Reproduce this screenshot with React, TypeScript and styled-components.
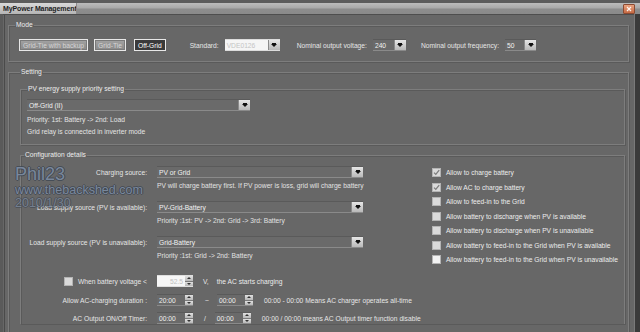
import React from 'react';
import styled, { createGlobalStyle } from 'styled-components';

const GlobalStyle = createGlobalStyle`
  html, body {
    margin: 0;
    padding: 0;
    background: #676767;
  }
  body {
    width: 640px;
    height: 332px;
    overflow: hidden;
    font-family: "Liberation Sans", Arial, sans-serif;
    font-size: 6.7px;
    color: #ececec;
  }
`;

const Window = styled.div`
  position: relative;
  width: 640px;
  height: 332px;
  display: flex;
  flex-direction: column;
  background: #676767;
  overflow: hidden;
`;

const BehindStrip = styled.div`
  height: 3px;
  background: #5c5c5c;
`;

const TitleBar = styled.div`
  height: 11px;
  display: flex;
  align-items: stretch;
  background: linear-gradient(#bcbcbc 0%, #a9a9a9 45%, #8d8d8d 55%, #8a8a8a 100%);
  border-bottom: 1px solid #4e4e4e;
`;

const TitleTab = styled.div`
  width: 77px;
  padding-left: 3px;
  box-sizing: border-box;
  display: flex;
  align-items: center;
  white-space: nowrap;
  overflow: hidden;
  font-weight: bold;
  font-size: 7px;
  letter-spacing: -0.1px;
  color: #1e1e1e;
  background: linear-gradient(#d9d9d9, #b4b4b4);
  border-right: 1px solid #8c8c8c;
`;

const TitleFill = styled.div`
  flex: 1;
`;

const CloseButton = styled.div`
  width: 10px;
  margin: 1px 5px 0 0;
  display: flex;
  align-items: center;
  justify-content: center;
  background: linear-gradient(#e9a27f, #c66a44);
  border: 1px solid #8b4a32;
  border-radius: 1px;
`;

const Body = styled.div`
  flex: 1;
  display: flex;
  flex-direction: column;
  padding: 5px 6px 0 3px;
  margin-left: 4px;
  margin-right: 5px;
  border-left: 1px solid #4a4a4a;
  position: relative;
`;

const LeftEdge = styled.div`
  position: absolute;
  left: 0;
  top: 14px;
  bottom: 0;
  width: 3px;
  background: #5a5a5a;
`;

const RightEdge = styled.div`
  position: absolute;
  right: 0;
  top: 14px;
  bottom: 0;
  width: 5px;
  background: #3b3b3b;
  border-left: 1px solid #7a7a7a;
`;

const Group = styled.fieldset`
  margin: 0;
  padding: 0 6px 0 6px;
  border: 1px solid #7d7d7d;
  box-shadow: inset 1px 1px 0 #5a5a5a, 1px 1px 0 #5a5a5a;
  min-width: 0;
`;

const Legend = styled.legend`
  padding: 0 1px;
  line-height: 10px;
  color: #eeeeee;
`;

const ModeGroup = styled(Group)`
  padding: 9px 6px 10px 6px;
`;

const SettingGroup = styled(Group)`
  margin-top: 5px;
  flex: 1;
  padding: 7px 3px 0 11px;
  border-bottom: none;
`;

const PvGroup = styled(Group)`
  padding: 5px 6px 6px 6px;
`;

const ConfigGroup = styled(Group)`
  margin-top: 5px;
  padding: 6px 6px 0 3px;
  border-bottom: none;
  flex: 1;
`;

const ModeRow = styled.div`
  display: flex;
  align-items: center;
  height: 12px;
  margin-left: 4px;
`;

const ModeButton = styled.div<{ $active?: boolean; $gap: number }>`
  height: 12px;
  box-sizing: border-box;
  margin-left: ${p => p.$gap}px;
  padding: 0 3px;
  display: flex;
  align-items: center;
  border: 1px solid #e8e8e8;
  background: ${p => (p.$active ? '#3a3a3a' : 'linear-gradient(#a3a3a3, #8a8a8a)')};
  color: ${p => (p.$active ? '#ffffff' : '#d6d6d6')};
  box-shadow: ${p => (p.$active ? 'none' : 'inset 0 0 0 1px #7a7a7a')};
`;

const FieldLabel = styled.span<{ $gap: number }>`
  margin-left: ${p => p.$gap}px;
  margin-right: 6px;
  color: #e6e6e6;
  white-space: nowrap;
`;

const SelectBox = styled.div<{ $width: number; $disabled?: boolean }>`
  width: ${p => p.$width}px;
  height: 12px;
  box-sizing: border-box;
  display: flex;
  align-items: stretch;
  background: ${p => (p.$disabled ? '#f5f5f5' : '#6a6a6a')};
  border-top: 1px solid ${p => (p.$disabled ? '#dcdcdc' : '#5a5a5a')};
  border-bottom: 1px solid ${p => (p.$disabled ? '#dcdcdc' : '#8a8a8a')};
`;

const SelectText = styled.span<{ $disabled?: boolean }>`
  flex: 1;
  padding-left: 2px;
  display: flex;
  align-items: center;
  white-space: nowrap;
  color: ${p => (p.$disabled ? '#c4c4c4' : '#f2f2f2')};
`;

const ArrowButton = styled.span`
  width: 11px;
  display: flex;
  align-items: center;
  justify-content: center;
  background: linear-gradient(#e6e6e6, #b9b9b9);
  border-left: 1px solid #8a8a8a;
`;

const Triangle = styled.span`
  width: 0;
  height: 0;
  border-left: 3px solid transparent;
  border-right: 3px solid transparent;
  border-top: 3px solid #111;
  box-shadow: 0 -2px 0 -1px #111;
`;

const InfoLine = styled.div<{ $top?: number }>`
  line-height: 12px;
  margin-top: ${p => p.$top ?? 0}px;
  color: #e4e4e4;
  white-space: nowrap;
`;

const ConfigBody = styled.div`
  display: flex;
  align-items: flex-start;
`;

const LeftColumn = styled.div`
  width: 408px;
  display: flex;
  flex-direction: column;
`;

const SourceGroup = styled.div`
  display: flex;
  flex-direction: column;
  margin-bottom: 9px;
`;

const FormRow = styled.div<{ $top?: number }>`
  display: grid;
  grid-template-columns: 123px auto;
  column-gap: 10px;
  align-items: center;
  height: 12px;
  margin-top: ${p => p.$top ?? 0}px;
`;

const RowLabel = styled.span`
  display: flex;
  align-items: center;
  justify-content: flex-end;
  gap: 5px;
  white-space: nowrap;
  color: #e6e6e6;
`;

const Note = styled.div`
  margin: 2px 0 0 133px;
  line-height: 12px;
  white-space: nowrap;
  color: #e2e2e2;
`;

const Inline = styled.div`
  display: flex;
  align-items: center;
  white-space: nowrap;
`;

const Sep = styled.span<{ $left: number; $right: number }>`
  margin: 0 ${p => p.$right}px 0 ${p => p.$left}px;
  color: #e6e6e6;
`;

const SpinBox = styled.div<{ $disabled?: boolean }>`
  width: 36px;
  height: 12px;
  box-sizing: border-box;
  display: flex;
  background: ${p => (p.$disabled ? '#f6f6f6' : '#6a6a6a')};
  border-top: 1px solid ${p => (p.$disabled ? '#dedede' : '#5a5a5a')};
  border-bottom: 1px solid ${p => (p.$disabled ? '#dedede' : '#8a8a8a')};
`;

const SpinText = styled.span<{ $disabled?: boolean }>`
  flex: 1;
  display: flex;
  align-items: center;
  justify-content: ${p => (p.$disabled ? 'flex-end' : 'flex-start')};
  padding: 0 2px;
  color: ${p => (p.$disabled ? '#c0c0c0' : '#f0f0f0')};
`;

const SpinButtons = styled.span`
  width: 8px;
  display: flex;
  flex-direction: column;
  gap: 1px;
  background: #7a7a7a;
`;

const SpinHalf = styled.span<{ $down?: boolean }>`
  flex: 1;
  display: flex;
  align-items: center;
  justify-content: center;
  background: linear-gradient(#e0e0e0, #b8b8b8);
  &::after {
    content: '';
    border-left: 2px solid transparent;
    border-right: 2px solid transparent;
    ${p => (p.$down ? 'border-top: 2px solid #333;' : 'border-bottom: 2px solid #333;')}
  }
`;

const RightColumn = styled.div`
  margin-top: 2px;
  display: flex;
  flex-direction: column;
  gap: 5.5px;
`;

const CheckRow = styled.label`
  display: flex;
  align-items: center;
  gap: 5px;
  height: 9px;
  white-space: nowrap;
  color: #ededed;
`;

const Box = styled.span<{ $light?: boolean }>`
  width: 9px;
  height: 9px;
  box-sizing: border-box;
  display: flex;
  align-items: center;
  justify-content: center;
  background: ${p => (p.$light ? '#f2f2f2' : '#dadada')};
  border: 1px solid #b4b4b4;
`;

const Watermark = styled.div`
  position: absolute;
  left: 15px;
  top: 164px;
  display: flex;
  flex-direction: column;
  pointer-events: none;
  color: rgba(138, 154, 176, 0.8);
  text-shadow: -1px 0 0 rgba(62, 70, 82, 0.8), 1px 0 0 rgba(62, 70, 82, 0.8),
    0 -1px 0 rgba(62, 70, 82, 0.8), 0 1px 0 rgba(62, 70, 82, 0.8);
  font-family: "Liberation Sans", Arial, sans-serif;
`;

const MarkName = styled.span`
  font-size: 18px;
  line-height: 20px;
`;

const MarkSite = styled.span`
  font-size: 12.5px;
  line-height: 13px;
`;

const MarkDate = styled.span`
  font-size: 12.5px;
  line-height: 13px;
  opacity: 0.75;
`;

const Select = ({ value, width, disabled }: { value: string; width: number; disabled?: boolean }) => (
  <SelectBox $width={width} $disabled={disabled}>
    <SelectText $disabled={disabled}>{value}</SelectText>
    <ArrowButton>
      <Triangle />
    </ArrowButton>
  </SelectBox>
);

const Spinner = ({ value, disabled }: { value: string; disabled?: boolean }) => (
  <SpinBox $disabled={disabled}>
    <SpinText $disabled={disabled}>{value}</SpinText>
    <SpinButtons>
      <SpinHalf />
      <SpinHalf $down />
    </SpinButtons>
  </SpinBox>
);

const Check = ({ checked, light }: { checked?: boolean; light?: boolean }) => (
  <Box $light={light}>
    {checked && (
      <svg width="7" height="7" viewBox="0 0 7 7">
        <path d="M1 3.6 L2.8 5.4 L6.2 1.2" fill="none" stroke="#7c7c7c" strokeWidth="1.3" />
      </svg>
    )}
  </Box>
);

const options = [
  { label: 'Allow to charge battery', checked: true },
  { label: 'Allow AC to charge battery', checked: true },
  { label: 'Allow to feed-in to the Grid' },
  { label: 'Allow battery to discharge when PV is available' },
  { label: 'Allow battery to discharge when PV is unavailable' },
  { label: 'Allow battery to feed-in to the Grid when PV is available' },
  { label: 'Allow battery to feed-in to the Grid when PV is unavailable', light: true },
];

const sources = [
  {
    label: 'Charging source:',
    value: 'PV or Grid',
    note: 'PV will charge battery first. If PV power is loss, grid will charge battery',
  },
  {
    label: 'Load supply source (PV is available):',
    value: 'PV-Grid-Battery',
    note: 'Priority :1st: PV -> 2nd: Grid -> 3rd: Battery',
  },
  {
    label: 'Load supply source (PV is unavailable):',
    value: 'Grid-Battery',
    note: 'Priority :1st: Grid -> 2nd: Battery',
  },
];

export default function App() {
  return (
    <>
      <GlobalStyle />
      <Window>
        <BehindStrip />
        <TitleBar>
          <TitleTab>MyPower Management</TitleTab>
          <TitleFill />
          <CloseButton>
            <svg width="6" height="6" viewBox="0 0 6 6">
              <path d="M1 1 L5 5 M5 1 L1 5" stroke="#fff4ee" strokeWidth="1.2" />
            </svg>
          </CloseButton>
        </TitleBar>
        <LeftEdge />
        <RightEdge />
        <Body>
          <ModeGroup>
            <Legend>Mode</Legend>
            <ModeRow>
              <ModeButton $gap={0}>Grid-Tie with backup</ModeButton>
              <ModeButton $gap={6}>Grid-Tie</ModeButton>
              <ModeButton $gap={8} $active>Off-Grid</ModeButton>
              <FieldLabel $gap={24}>Standard:</FieldLabel>
              <Select value="VDE0126" width={55} disabled />
              <FieldLabel $gap={17}>Nominal output voltage:</FieldLabel>
              <Select value="240" width={33} />
              <FieldLabel $gap={15}>Nominal output frequency:</FieldLabel>
              <Select value="50" width={31} />
            </ModeRow>
          </ModeGroup>

          <SettingGroup>
            <Legend>Setting</Legend>
            <PvGroup>
              <Legend>PV energy supply priority setting</Legend>
              <Select value="Off-Grid (II)" width={223} />
              <InfoLine $top={3}>Priority: 1st: Battery -&gt; 2nd: Load</InfoLine>
              <InfoLine>Grid relay is connected in inverter mode</InfoLine>
            </PvGroup>

            <ConfigGroup>
              <Legend>Configuration details</Legend>
              <ConfigBody>
                <LeftColumn>
                  {sources.map(s => (
                    <SourceGroup key={s.label}>
                      <FormRow>
                        <RowLabel>{s.label}</RowLabel>
                        <Select value={s.value} width={206} />
                      </FormRow>
                      <Note>{s.note}</Note>
                    </SourceGroup>
                  ))}
                  <FormRow $top={4}>
                    <RowLabel>
                      <Check />
                      When battery voltage &lt;
                    </RowLabel>
                    <Inline>
                      <Spinner value="52.5" disabled />
                      <Sep $left={10} $right={8}>V,</Sep>
                      <span>the AC starts charging</span>
                    </Inline>
                  </FormRow>
                  <FormRow $top={7}>
                    <RowLabel>Allow AC-charging duration :</RowLabel>
                    <Inline>
                      <Spinner value="20:00" />
                      <Sep $left={12} $right={8}>~</Sep>
                      <Spinner value="00:00" />
                      <Sep $left={11} $right={0}>00:00 - 00:00 Means AC charger operates all-time</Sep>
                    </Inline>
                  </FormRow>
                  <FormRow $top={6}>
                    <RowLabel>AC Output ON/Off Timer:</RowLabel>
                    <Inline>
                      <Spinner value="00:00" />
                      <Sep $left={11} $right={9}>/</Sep>
                      <Spinner value="00:00" />
                      <Sep $left={11} $right={0}>00:00 / 00:00 means AC Output timer function disable</Sep>
                    </Inline>
                  </FormRow>
                </LeftColumn>
                <RightColumn>
                  {options.map(o => (
                    <CheckRow key={o.label}>
                      <Check checked={o.checked} light={o.light} />
                      {o.label}
                    </CheckRow>
                  ))}
                </RightColumn>
              </ConfigBody>
            </ConfigGroup>
          </SettingGroup>
        </Body>
        <Watermark>
          <MarkName>Phil23</MarkName>
          <MarkSite>www.thebackshed.com</MarkSite>
          <MarkDate>2010/1/30</MarkDate>
        </Watermark>
      </Window>
    </>
  );
}
